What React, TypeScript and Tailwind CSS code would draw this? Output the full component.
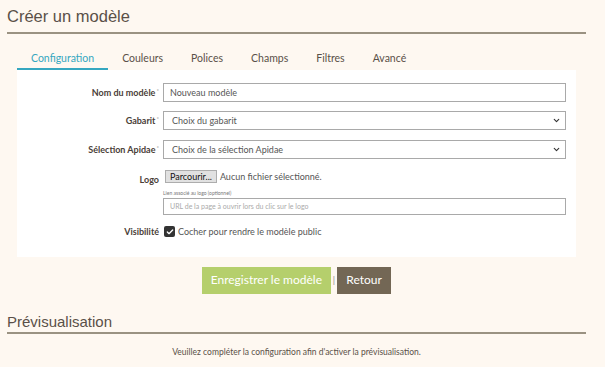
import { ChevronDown, Check } from 'lucide-react';

const tabs = ['Configuration', 'Couleurs', 'Polices', 'Champs', 'Filtres', 'Avancé'];

function Label({ text, required }: { text: string; required?: boolean }) {
  return (
    <div className="w-[146px] shrink-0 text-right text-[9px] font-bold text-[#4a4038] pr-[4px]">
      {text}
      {required && <sup className="text-[6px] font-normal text-[#888] ml-[1px]">*</sup>}
    </div>
  );
}

function SelectBox({ placeholder }: { placeholder: string }) {
  return (
    <div className="flex-1 h-[19px] border border-[#a9a9a9] bg-white flex items-center justify-between pl-[8px] pr-[4px] text-[9px] text-[#555]">
      <span>{placeholder}</span>
      <ChevronDown className="w-[9px] h-[9px] text-[#333]" strokeWidth={3} />
    </div>
  );
}

export default function App() {
  return (
    <div className="min-h-[367px] bg-[#fef8f1] font-['Lato',sans-serif] text-[#4a4038]">
      <div className="pl-[7px] pr-[19px] pt-[4px]">
        {/* Title */}
        <h1 className="font-['Liberation_Sans',sans-serif] text-[16.5px] leading-[24px] text-[#5a5048] pb-[4px] border-b-2 border-[#9a9282]">
          Créer un modèle
        </h1>

        <div className="px-[10px] pt-[15px]">
          {/* Tabs */}
          <div className="flex text-[10.5px] text-[#5a5048]">
            {tabs.map((t, i) => (
              <div
                key={t}
                className={
                  i === 0
                    ? 'px-[14px] pb-[1px] text-[#35a7c0] border-b-2 border-[#35a7c0] leading-[18px]'
                    : 'px-[14px] pb-[1px] leading-[18px] border-b-2 border-transparent'
                }
              >
                {t}
              </div>
            ))}
          </div>

          {/* Form panel */}
          <div className="bg-white pr-[10px] pt-[13px] pb-[18px]">
            <div className="flex items-center">
              <Label text="Nom du modèle" required />
              <div className="flex-1 h-[19px] border border-[#a9a9a9] pl-[6px] flex items-center text-[9px] text-[#555]">
                Nouveau modèle
              </div>
            </div>

            <div className="flex items-center mt-[9px]">
              <Label text="Gabarit" required />
              <SelectBox placeholder="Choix du gabarit" />
            </div>

            <div className="flex items-center mt-[10px]">
              <Label text="Sélection Apidae" required />
              <SelectBox placeholder="Choix de la sélection Apidae" />
            </div>

            <div className="flex items-start mt-[11px]">
              <div className="pt-[3px]">
                <Label text="Logo" />
              </div>
              <div className="flex-1">
                <div className="flex items-center h-[13px] text-[9px]">
                  <span className="ml-[2px] h-[13px] px-[4px] bg-[#e1e1e1] border border-[#adadad] flex items-center text-[#111]">
                    Parcourir...
                  </span>
                  <span className="ml-[3px] text-[#555]">Aucun fichier sélectionné.</span>
                </div>
                <div className="text-[5px] text-[#777] mt-[5px] leading-[10px]">Lien associé au logo (optionnel)</div>
                <div className="h-[17px] border border-[#a9a9a9] pl-[6px] flex items-center text-[7px] text-[#aaa]">
                  URL de la page à ouvrir lors du clic sur le logo
                </div>
              </div>
            </div>

            <div className="flex items-center mt-[10px]">
              <Label text="Visibilité" />
              <div className="flex items-center text-[9px] text-[#555]">
                <span className="ml-[1px] w-[11px] h-[11px] rounded-[2px] bg-[#333] flex items-center justify-center">
                  <Check className="w-[8px] h-[8px] text-white" strokeWidth={4} />
                </span>
                <span className="ml-[3px]">Cocher pour rendre le modèle public</span>
              </div>
            </div>
          </div>

          {/* Buttons */}
          <div className="flex items-center justify-center mt-[10px]">
            <button className="w-[129px] h-[27px] bg-[#b5cf6c] text-white text-[12px]">Enregistrer le modèle</button>
            <span className="mx-[2px] text-[9px] text-[#888]">|</span>
            <button className="w-[54px] h-[27px] bg-[#736755] text-white text-[12px]">Retour</button>
          </div>
        </div>

        {/* Preview */}
        <h2 className="mt-[19px] font-['Liberation_Sans',sans-serif] text-[15px] leading-[18px] text-[#5a5048] pb-[1px] border-b-2 border-[#9a9282]">
          Prévisualisation
        </h2>
        <p className="text-center text-[8.5px] text-[#5a5048] mt-[12px]">
          Veuillez compléter la configuration afin d'activer la prévisualisation.
        </p>
      </div>
    </div>
  );
}
